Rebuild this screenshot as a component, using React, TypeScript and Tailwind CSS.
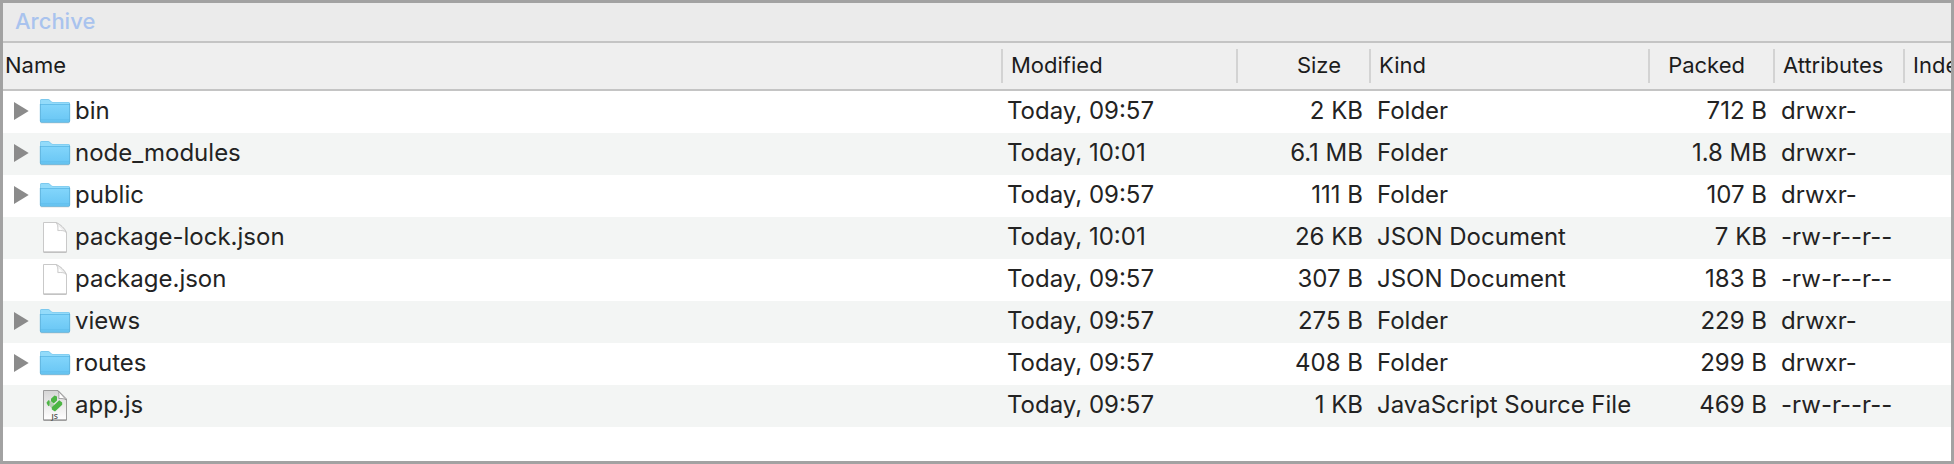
import { useState } from 'react'
import clsx from 'clsx'

type IconType = 'folder' | 'document' | 'script'

type Entry = {
  name: string
  icon: IconType
  modified: string
  size: string
  kind: string
  packed: string
  attributes: string
}

const ENTRIES: Entry[] = [
  { name: 'bin', icon: 'folder', modified: 'Today, 09:57', size: '2 KB', kind: 'Folder', packed: '712 B', attributes: 'drwxr-' },
  { name: 'node_modules', icon: 'folder', modified: 'Today, 10:01', size: '6.1 MB', kind: 'Folder', packed: '1.8 MB', attributes: 'drwxr-' },
  { name: 'public', icon: 'folder', modified: 'Today, 09:57', size: '111 B', kind: 'Folder', packed: '107 B', attributes: 'drwxr-' },
  { name: 'package-lock.json', icon: 'document', modified: 'Today, 10:01', size: '26 KB', kind: 'JSON Document', packed: '7 KB', attributes: '-rw-r--r--' },
  { name: 'package.json', icon: 'document', modified: 'Today, 09:57', size: '307 B', kind: 'JSON Document', packed: '183 B', attributes: '-rw-r--r--' },
  { name: 'views', icon: 'folder', modified: 'Today, 09:57', size: '275 B', kind: 'Folder', packed: '229 B', attributes: 'drwxr-' },
  { name: 'routes', icon: 'folder', modified: 'Today, 09:57', size: '408 B', kind: 'Folder', packed: '299 B', attributes: 'drwxr-' },
  { name: 'app.js', icon: 'script', modified: 'Today, 09:57', size: '1 KB', kind: 'JavaScript Source File', packed: '469 B', attributes: '-rw-r--r--' },
]

const COLUMNS = [
  { label: 'Name', width: '', cell: 'pl-0.5' },
  { label: 'Modified', width: 'w-[235px]', cell: 'pl-2' },
  { label: 'Size', width: 'w-[133px]', cell: 'justify-end pr-7' },
  { label: 'Kind', width: 'w-[279px]', cell: 'pl-2' },
  { label: 'Packed', width: 'w-[125px]', cell: 'justify-end pr-7' },
  { label: 'Attributes', width: 'w-[130px]', cell: 'pl-2' },
  { label: 'Index', width: 'w-[46px]', cell: 'pl-2' },
]

function FolderIcon() {
  return (
    <svg viewBox="0 0 32 32" className="h-8 w-8 shrink-0" aria-hidden="true">
      <defs>
        <linearGradient id="folder-front" x1="0" y1="0" x2="0" y2="1">
          <stop offset="0" stopColor="#82d5fb" />
          <stop offset="1" stopColor="#69c6f4" />
        </linearGradient>
      </defs>
      <rect x="1.5" y="26" width="29" height="2.5" rx="1" fill="#000" opacity="0.12" />
      <path
        d="M1 5.500a1.500 1.500 0 0 1 1.500-1.500H9c.8 0 1.200.3 1.700.8l1.500 1.400c.5.500.9.700 1.600.700H29.500A1.500 1.500 0 0 1 31 8.400V26a1.500 1.500 0 0 1-1.500 1.500h-27A1.500 1.500 0 0 1 1 26z"
        fill="#74c3ea"
      />
      <path d="M2.300 4.700h6.900c.7 0 1 .3 1.400.7l1.500 1.400c.5.500 1 .7 1.700.7H30V9.500H1.500V5.500c0-.5.3-.8.8-.8z" fill="#93dbfa" />
      <path d="M1.500 9.500h29V25.500a1.500 1.500 0 0 1-1.500 1.500H3a1.500 1.500 0 0 1-1.500-1.500z" fill="url(#folder-front)" />
      <path d="M1 9.500h30" stroke="#5db9e6" strokeWidth="0.8" />
      <path d="M1.500 24.800h29" stroke="#5dbbe9" strokeWidth="0.8" />
      <path d="M1.300 9v17c0 .8.500 1.300 1.200 1.300h27c.7 0 1.200-.5 1.200-1.300V9" fill="none" stroke="#58aed8" strokeWidth="0.7" />
    </svg>
  )
}

function DocumentIcon() {
  return (
    <svg viewBox="0 0 32 32" className="h-8 w-8 shrink-0" aria-hidden="true">
      <path d="M4.500 1.500h12.500c4 1.500 9.500 6.500 10.500 10.500v19h-23z" fill="#fff" stroke="#c9c9c9" strokeLinejoin="round" />
      <path d="M4.500 31.200h23" stroke="#b4b4b4" />
      <path d="M17 1.600c1.800 1.400 2 4.500 1.800 8 3.300-.3 7-.2 8.500 1.900-1.500-4-6.300-8.400-10.300-9.900z" fill="#eee" stroke="#c4c4c4" strokeWidth="0.8" strokeLinejoin="round" />
      <path d="M19.800 5.500v3.300h3.600z" fill="#fff" />
    </svg>
  )
}

function ScriptIcon() {
  return (
    <svg viewBox="0 0 32 32" className="h-8 w-8 shrink-0" aria-hidden="true">
      <defs>
        <linearGradient id="script-page" x1="0" y1="0" x2="0" y2="1">
          <stop offset="0" stopColor="#d6d6d6" />
          <stop offset="0.7" stopColor="#f3f3f3" />
          <stop offset="1" stopColor="#fff" />
        </linearGradient>
      </defs>
      <path d="M4.500 1.500h14.500L27.500 10v21h-23z" fill="url(#script-page)" stroke="#9c9c9c" strokeLinejoin="round" />
      <path d="M4.500 31.200h23" stroke="#8c8c8c" />
      <path d="M19 1.800c1.200 2 1 5 .8 7.700 2.800-.1 6 .1 7.500 1.500z" fill="#fff" stroke="#8f8f8f" strokeWidth="0.8" strokeLinejoin="round" />
      <path d="m9 12.500 6 6" stroke="#b5cdb2" strokeWidth="4" />
      <g fill="#4cb544">
        <path d="M12 9.800 15.500 6.500l2.500 1v4l-3.300 3L12 12.300z" />
        <path d="M7.500 13.800 9.500 11l1.200 1.700-.4 3.800-1 .8z" />
        <path d="m12.800 18.200 7.400-7 3 2.400v2.200l-7.200 6.700-3.200-2z" />
      </g>
      <text x="15.800" y="29.500" textAnchor="middle" fontFamily="Open Sans, sans-serif" fontSize="7.500" fontWeight="600" fill="#444">
        JS
      </text>
    </svg>
  )
}

function EntryIcon({ type }: { type: IconType }) {
  if (type === 'folder') return <FolderIcon />
  if (type === 'script') return <ScriptIcon />
  return <DocumentIcon />
}

function Disclosure({ name }: { name: string }) {
  const [open, setOpen] = useState(false)

  return (
    <button
      type="button"
      aria-label={`Expand ${name}`}
      aria-expanded={open}
      onClick={() => setOpen(!open)}
      className="h-5 w-4 shrink-0"
    >
      <svg viewBox="0 0 16 20" className={clsx('h-5 w-4', open && 'rotate-90')} aria-hidden="true">
        <path d="M0 1v18l14.700-9z" fill="#8b8b8b" />
      </svg>
    </button>
  )
}

export default function App() {
  return (
    <main className="flex min-h-screen flex-col overflow-hidden border-3 border-[#a2a2a2] bg-white font-['Inter',sans-serif] text-[#232323]">
      <h1 className="border-b-2 border-[#c4c4c4] bg-[#ebebeb] px-3 pt-0.5 pb-1 text-[22px] leading-8 font-medium text-[#a9c3ee]">
        Archive
      </h1>
      <table className="w-full table-fixed border-collapse text-left whitespace-nowrap">
        <thead className="bg-[#efefef] text-[22px] text-[#1c1c1c]">
          <tr>
            {COLUMNS.map((column, i) => (
              <th key={column.label} scope="col" className={clsx('overflow-hidden p-0 py-1.5 font-normal', column.width)}>
                <div
                  className={clsx(
                    'flex h-[34px] items-center pb-0.5',
                    column.cell,
                    i < COLUMNS.length - 1 && 'border-r-2 border-[#d3d3d3]',
                  )}
                >
                  {column.label}
                </div>
              </th>
            ))}
          </tr>
          <tr aria-hidden="true">
            <td colSpan={7} className="h-0.5 bg-[#c4c4c4] p-0" />
          </tr>
        </thead>
        <tbody className="text-[24px] leading-10">
          {ENTRIES.map((entry) => (
            <tr key={entry.name} className="even:bg-[#f3f5f4]">
              <td className="p-0 pb-0.5">
                <div className="flex items-center pl-[11px]">
                  {entry.icon === 'folder' ? <Disclosure name={entry.name} /> : <span className="w-4" />}
                  <span className="flex items-center gap-1 pl-[9px]">
                    <EntryIcon type={entry.icon} />
                    {entry.name}
                  </span>
                </div>
              </td>
              <td className="p-0 pb-0.5 pl-1">{entry.modified}</td>
              <td className="p-0 pr-2 pb-0.5 text-right">{entry.size}</td>
              <td className="p-0 pb-0.5 pl-1.5">{entry.kind}</td>
              <td className="p-0 pr-2 pb-0.5 text-right">{entry.packed}</td>
              <td className="p-0 pb-0.5 pl-1.5">{entry.attributes}</td>
              <td className="p-0" />
            </tr>
          ))}
        </tbody>
      </table>
    </main>
  )
}
